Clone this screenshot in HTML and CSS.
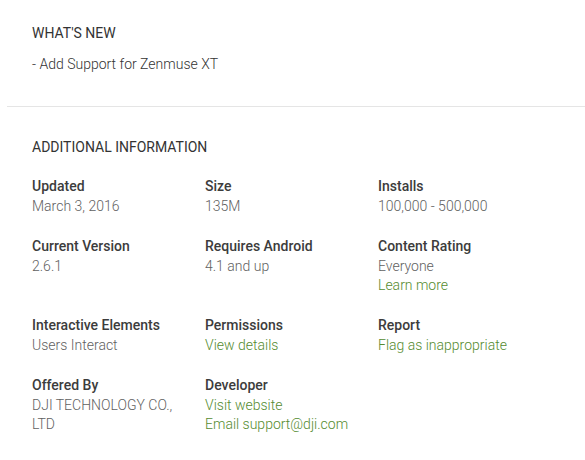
FILE: index.html
```html
<!doctype html>
<html>
<head>
<meta charset="utf-8">
<title>Details</title>
<link rel="stylesheet" href="styles.css">
</head>
<body>
<div class="details">
	<div class="section whats-new">
		<h3 class="heading">What's New</h3>
		<div class="recent">- Add Support for Zenmuse XT</div>
	</div>
	<div class="section more-info">
		<h3 class="heading">Additional Information</h3>
		<div class="meta">
			<div class="meta-item">
				<div class="title">Updated</div>
				<div class="content">March 3, 2016</div>
			</div>
			<div class="meta-item">
				<div class="title">Size</div>
				<div class="content">135M</div>
			</div>
			<div class="meta-item">
				<div class="title">Installs</div>
				<div class="content">100,000 - 500,000</div>
			</div>
			<div class="meta-item">
				<div class="title">Current Version</div>
				<div class="content">2.6.1</div>
			</div>
			<div class="meta-item">
				<div class="title">Requires Android</div>
				<div class="content">4.1 and up</div>
			</div>
			<div class="meta-item">
				<div class="title">Content Rating</div>
				<div class="content">Everyone</div>
				<a class="content link" href="#">Learn more</a>
			</div>
			<div class="meta-item">
				<div class="title">Interactive Elements</div>
				<div class="content">Users Interact</div>
			</div>
			<div class="meta-item">
				<div class="title">Permissions</div>
				<a class="content link" href="#">View details</a>
			</div>
			<div class="meta-item">
				<div class="title">Report</div>
				<a class="content link" href="#">Flag as inappropriate</a>
			</div>
			<div class="meta-item">
				<div class="title">Offered By</div>
				<div class="content">DJI TECHNOLOGY CO., LTD</div>
			</div>
			<div class="meta-item">
				<div class="title">Developer</div>
				<a class="content link" href="#">Visit website</a>
				<a class="content link" href="#">Email support@dji.com</a>
			</div>
		</div>
	</div>
</div>
</body>
</html>
```
FILE: styles.css
```css
*{ margin:0; padding:0; box-sizing:border-box;}
body{ background:#fff; font-family:Roboto,"Liberation Sans",Arial,sans-serif; color:#333; font-size:14px;}

.details{ padding-left:7px;}
.section{ padding-left:25px; padding-right:20px;}
.whats-new{ padding-top:23px; padding-bottom:32px; border-bottom:1px solid #e5e5e5;}
.more-info{ padding-top:30px;}

.heading{ font-size:14px; font-weight:normal; text-transform:uppercase; line-height:20px; color:#333;}
.recent{ margin-top:11px; line-height:20px; color:#333; font-weight:300;}

.meta{ display:grid; grid-template-columns:173px 173px 173px; row-gap:19px; margin-top:18px;}
.meta-item .title{ font-weight:500; line-height:22px; color:#3c3c3c;}
.meta-item .content{ display:block; line-height:19px; color:#616161; font-weight:300; padding-right:12px;}
.meta-item .link{ color:#558b2f; text-decoration:none;}
```
